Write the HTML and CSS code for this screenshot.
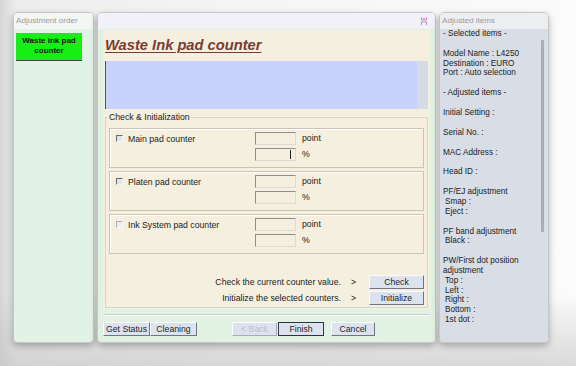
FILE: index.html
```html
<!DOCTYPE html>
<html lang="en">
<head>
    <meta charset="UTF-8">
    <meta name="viewport" content="width=device-width, initial-scale=1.0">
    <title>Waste Ink pad counter</title>
    <link rel="stylesheet" href="styles.css">
</head>
<body>
    <div class="desk">
        <!-- Adjustment order -->
        <section class="pane pane-order">
            <div class="pane-head">Adjustment order</div>
            <div class="order-body">
                <div class="order-item">Waste ink pad<br>counter</div>
            </div>
        </section>

        <!-- Main window -->
        <section class="pane pane-main">
            <div class="pane-head main-head">
                <svg class="restore" width="6" height="8" viewBox="0 0 6 8">
                    <path d="M0.5 0 V3 H5.5 V0 M0.5 8 V5 H5.5 V8 M2 1.5 H4" fill="none" stroke="#c48bc8" stroke-width="1"/>
                </svg>
            </div>
            <div class="main-body">
                <div class="sheet">
                    <h1 class="title">Waste Ink pad counter</h1>
                    <div class="message">
                        <div class="message-text"></div>
                        <div class="message-rail"></div>
                    </div>

                    <fieldset class="group">
                        <legend>Check &amp; Initialization</legend>

                        <div class="counters">
                            <div class="counter">
                                <div class="counter-name"><span class="check"></span>Main pad counter</div>
                                <div class="field"></div>
                                <div class="unit">point</div>
                                <div class="field field-caret"><span class="caret"></span></div>
                                <div class="unit">%</div>
                            </div>
                            <div class="counter">
                                <div class="counter-name"><span class="check"></span>Platen pad counter</div>
                                <div class="field"></div>
                                <div class="unit">point</div>
                                <div class="field"></div>
                                <div class="unit">%</div>
                            </div>
                            <div class="counter">
                                <div class="counter-name"><span class="check check-off"></span>Ink System pad counter</div>
                                <div class="field"></div>
                                <div class="unit">point</div>
                                <div class="field"></div>
                                <div class="unit">%</div>
                            </div>
                        </div>

                        <div class="actions">
                            <div class="action-row">
                                <span>Check the current counter value.</span>
                                <span class="arrow">&gt;</span>
                                <button class="btn btn-action">Check</button>
                            </div>
                            <div class="action-row">
                                <span>Initialize the selected counters.</span>
                                <span class="arrow">&gt;</span>
                                <button class="btn btn-action">Initialize</button>
                            </div>
                        </div>
                    </fieldset>
                </div>

                <div class="separator"></div>

                <div class="footer">
                    <button class="btn btn-foot">Get Status</button>
                    <button class="btn btn-foot">Cleaning</button>
                    <button class="btn btn-back" disabled>&lt; Back</button>
                    <button class="btn btn-finish">Finish</button>
                    <button class="btn btn-cancel">Cancel</button>
                </div>
            </div>
        </section>

        <!-- Adjusted items -->
        <section class="pane pane-items">
            <div class="pane-head items-head">Adjusted items</div>
            <div class="items-body">
                <div class="items-text">
                    <p>- Selected items -</p>
                    <p>Model Name : L4250<br>Destination : EURO<br>Port : Auto selection</p>
                    <p>- Adjusted items -</p>
                    <p>Initial Setting :</p>
                    <p>Serial No. :</p>
                    <p>MAC Address :</p>
                    <p>Head ID :</p>
                    <p>PF/EJ adjustment<br><span class="sub">Smap :</span><br><span class="sub">Eject :</span></p>
                    <p>PF band adjustment<br><span class="sub">Black :</span></p>
                    <p>PW/First dot position<br>adjustment<br><span class="sub">Top :</span><br><span class="sub">Left :</span><br><span class="sub">Right :</span><br><span class="sub">Bottom :</span><br><span class="sub">1st dot :</span></p>
                </div>
                <div class="scroll-thumb"></div>
            </div>
        </section>
    </div>
</body>
</html>
```

FILE: styles.css
```css
/* Global */
* {
    box-sizing: border-box;
}

body {
    margin: 0;
    height: 366px;
    overflow: hidden;
    font-family: "Liberation Sans", Arial, sans-serif;
    color: #1b1b1b;
    background:
        linear-gradient(to bottom, rgba(255, 255, 255, 0) 80%, rgba(190, 190, 190, 0.55) 100%),
        linear-gradient(to right, #d6d6d6 0, #ededed 3%, #f5f5f5 40%, #fbfbfb 100%);
}

.desk {
    display: flex;
    gap: 3px;
    padding: 12px 0 0 13px;
}

/* Panes */
.pane {
    height: 331px;
    border: 1px solid #c4c7c4;
    border-radius: 5px;
    overflow: hidden;
    display: flex;
    flex-direction: column;
    box-shadow: 0 3px 7px rgba(0, 0, 0, 0.28);
}

.pane-head {
    height: 16px;
    flex: none;
    padding-left: 2px;
    font-size: 8.1px;
    line-height: 16px;
    color: #9b9b9b;
}

/* Adjustment order */
.pane-order {
    width: 81px;
}
.pane-order .pane-head {
    background-color: #f3f6f3;
}
.order-body {
    flex: 1;
    background-color: #e2f2e4;
    padding: 4px 11px 0 2px;
}
.order-item {
    height: 28px;
    padding-top: 3px;
    background-color: #17ee17;
    border-bottom: 1px solid #33513a;
    font-size: 8px;
    font-weight: bold;
    line-height: 9.6px;
    text-align: center;
    color: #111;
}

/* Main window */
.pane-main {
    width: 339px;
}
.main-head {
    background-color: #f2f1f8;
    display: flex;
    justify-content: flex-end;
    align-items: center;
    padding-right: 8px;
}
.main-body {
    flex: 1;
    background-color: #e2f2e2;
    padding: 1px 5px 0 5px;
}
.sheet {
    height: 279px;
    background-color: #f4efde;
    padding: 0 2px;
    font-size: 8.7px;
}
.title {
    margin: 0;
    height: 31px;
    font-size: 14.7px;
    line-height: 31px;
    font-weight: bold;
    font-style: italic;
    text-decoration: underline;
    text-decoration-thickness: 1px;
    text-underline-offset: 2px;
    color: #7d3b31;
}
.message {
    height: 48px;
    display: flex;
    border-left: 1px solid #4d5566;
}
.message-text {
    flex: 1;
    background-color: #c7d1fa;
}
.message-rail {
    width: 11px;
    background-color: #d6dbe8;
}

/* Check & Initialization */
.group {
    margin: 3px 0 0 0;
    padding: 0 3px 2px 3px;
    border: 1px solid #d8d4c6;
    min-width: 0;
}
.group legend {
    padding: 0 1px;
    margin-left: -1px;
    line-height: 10px;
    font-size: 8.7px;
}
.counters {
    display: flex;
    flex-direction: column;
    gap: 3px;
    margin-top: 6px;
}
.counter {
    height: 40px;
    border: 1px solid #c9c5b4;
    box-shadow: inset 1px 1px 0 #fff;
    padding: 3px 0 0 6px;
    display: grid;
    grid-template-columns: 139px 41px auto;
    grid-template-rows: 13px 13px;
    row-gap: 3px;
}
.counter-name {
    display: flex;
    align-items: center;
}
.counter-name + .field + .unit + .field {
    grid-column: 2;
}
.check {
    width: 7px;
    height: 7px;
    margin-right: 5px;
    background-color: #dfe3ec;
    border: 1px solid;
    border-color: #6a6a6a #f8f8f8 #f8f8f8 #6a6a6a;
}
.check-off {
    background-color: #eceef3;
    border-color: #b0b0b0 #fafafa #fafafa #b0b0b0;
}
.field {
    border: 1px solid;
    border-color: #8d8d8d #dedad0 #dedad0 #8d8d8d;
    display: flex;
    justify-content: flex-end;
    padding-right: 4px;
}
.caret {
    width: 1px;
    height: 9px;
    margin-top: 1px;
    background-color: #222;
}
.unit {
    padding-left: 6px;
    line-height: 13px;
}

.actions {
    margin-top: 21px;
    display: flex;
    flex-direction: column;
    gap: 2px;
}
.action-row {
    display: flex;
    justify-content: flex-end;
    align-items: center;
    height: 14px;
}
.arrow {
    margin: 0 13px 0 10px;
}

/* Buttons */
.btn {
    height: 14px;
    padding: 0;
    font-family: "Liberation Sans", Arial, sans-serif;
    font-size: 8.7px;
    line-height: 12px;
    color: #1d1d1d;
    background-color: #dde3ee;
    border: 1px solid;
    border-color: #fbfcfe #6f7683 #6f7683 #fbfcfe;
}
.btn-action {
    width: 55px;
}

.separator {
    margin-top: 5px;
    height: 2px;
    border-top: 1px solid #c6cec6;
    border-bottom: 1px solid #fbfdfb;
}

.footer {
    display: flex;
    margin-top: 6px;
}
.btn-foot {
    width: 47px;
}
.btn-back {
    width: 45px;
    margin-left: 35px;
    color: #bac0ca;
    border-color: #fbfcfe #a7adb8 #a7adb8 #fbfcfe;
}
.btn-finish {
    width: 46px;
    margin-left: 1px;
    border-color: #2f3440;
}
.btn-cancel {
    width: 44px;
    margin-left: 7px;
}

/* Adjusted items */
.pane-items {
    width: 110px;
}
.items-head {
    background-color: #eceef2;
}
.items-body {
    flex: 1;
    display: flex;
    background-color: #d8dde6;
}
.items-text {
    flex: 1;
    padding-left: 3px;
    font-size: 8.2px;
    line-height: 9.8px;
    color: #1c1c1c;
}
.items-text p {
    margin: 0 0 10px 0;
    white-space: nowrap;
}
.sub {
    padding-left: 2px;
}
.scroll-thumb {
    width: 3px;
    height: 192px;
    margin: 11px 4px 0 0;
    background-color: #a9aeb7;
    border-radius: 1px;
}
```
